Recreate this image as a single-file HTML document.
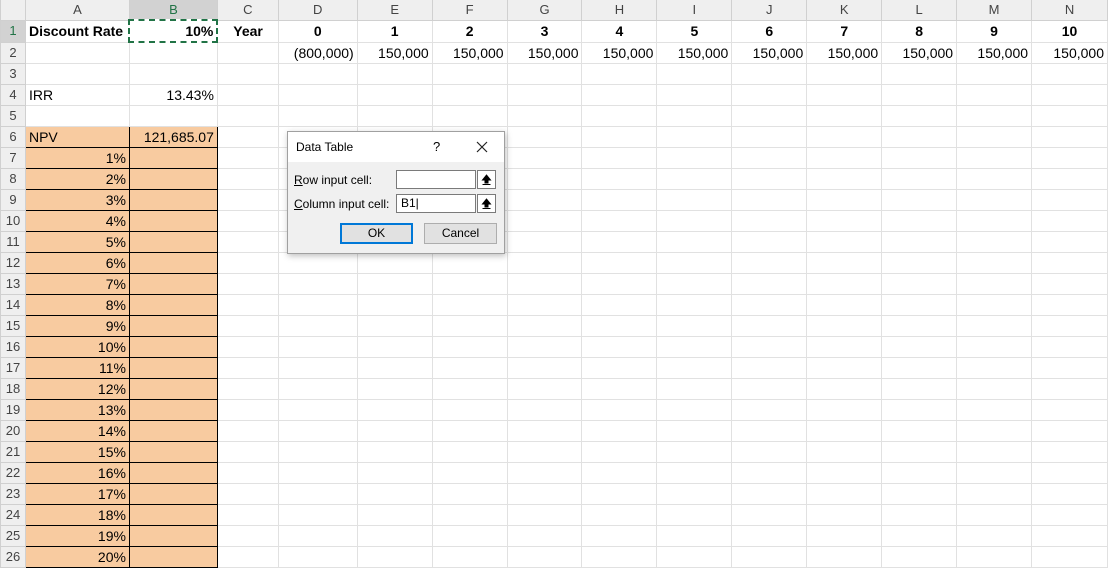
<!DOCTYPE html>
<html><head><style>
body{margin:0;width:1108px;height:566px;overflow:hidden;background:#fff;font-family:"Liberation Sans",Arial,sans-serif;font-size:14px;position:relative}
table{border-collapse:collapse;table-layout:fixed;position:absolute;left:0;top:-1px}
td{border:1px solid #e1e1e1;height:20px;padding:0 3px;white-space:nowrap;overflow:hidden;line-height:20px}
tr.h td{height:19px;line-height:19px;background:#efefef;color:#444;text-align:center;border-color:#d0d0d0;font-size:13px}
table td.rh{background:#efefef;color:#444;text-align:center;padding:0;border-color:#d0d0d0;font-size:13px}
.r{text-align:right}.c{text-align:center}.b{font-weight:bold}
.o{background:#f8cba0;border:1px solid #000}
.sel{background:#d2d2d2!important;color:#217346!important}
.dlg{position:absolute;left:287px;top:131px;width:216px;height:121px;background:#f0f0f0;border:1px solid #a0a0a0;box-shadow:1px 2px 6px rgba(0,0,0,.25);font-size:12px;color:#000}
.inp{position:absolute;left:108px;width:80px;height:19px;background:#fff;border:1px solid #7a7a7a;box-sizing:border-box;font-size:12px;line-height:17px;padding-left:4px}
.ib{position:absolute;left:189px;width:19px;height:19px;background:#fff;border:1px solid #7a7a7a;box-sizing:border-box}
.btn{position:absolute;top:91px;height:21px;box-sizing:border-box;background:#e1e1e1;border:1px solid #adadad;text-align:center;line-height:19px;font-size:12px}
</style></head><body>
<table>
<colgroup><col style="width:25px"><col style="width:104px"><col style="width:88px"><col style="width:61px"><col style="width:79px"><col style="width:75px"><col style="width:75px"><col style="width:75px"><col style="width:75px"><col style="width:75px"><col style="width:75px"><col style="width:75px"><col style="width:75px"><col style="width:75px"><col style="width:76px"></colgroup>
<tr class="h"><td></td><td>A</td><td class="sel">B</td><td>C</td><td>D</td><td>E</td><td>F</td><td>G</td><td>H</td><td>I</td><td>J</td><td>K</td><td>L</td><td>M</td><td>N</td></tr>
<tr><td class="rh sel">1</td><td class="b">Discount Rate</td><td class="r b" style="border:2px dashed #217346">10%</td><td class="c b">Year</td><td class="c b">0</td><td class="c b">1</td><td class="c b">2</td><td class="c b">3</td><td class="c b">4</td><td class="c b">5</td><td class="c b">6</td><td class="c b">7</td><td class="c b">8</td><td class="c b">9</td><td class="c b">10</td></tr>
<tr><td class="rh">2</td><td></td><td></td><td></td><td class="r">(800,000)</td><td class="r">150,000</td><td class="r">150,000</td><td class="r">150,000</td><td class="r">150,000</td><td class="r">150,000</td><td class="r">150,000</td><td class="r">150,000</td><td class="r">150,000</td><td class="r">150,000</td><td class="r">150,000</td></tr>
<tr><td class="rh">3</td><td></td><td></td><td></td><td></td><td></td><td></td><td></td><td></td><td></td><td></td><td></td><td></td><td></td><td></td></tr>
<tr><td class="rh">4</td><td>IRR</td><td class="r">13.43%</td><td></td><td></td><td></td><td></td><td></td><td></td><td></td><td></td><td></td><td></td><td></td><td></td></tr>
<tr><td class="rh">5</td><td></td><td></td><td></td><td></td><td></td><td></td><td></td><td></td><td></td><td></td><td></td><td></td><td></td><td></td></tr>
<tr><td class="rh">6</td><td class="o">NPV</td><td class="o r">121,685.07</td><td></td><td></td><td></td><td></td><td></td><td></td><td></td><td></td><td></td><td></td><td></td><td></td></tr>
<tr><td class="rh">7</td><td class="o r">1%</td><td class="o"></td><td></td><td></td><td></td><td></td><td></td><td></td><td></td><td></td><td></td><td></td><td></td><td></td></tr>
<tr><td class="rh">8</td><td class="o r">2%</td><td class="o"></td><td></td><td></td><td></td><td></td><td></td><td></td><td></td><td></td><td></td><td></td><td></td><td></td></tr>
<tr><td class="rh">9</td><td class="o r">3%</td><td class="o"></td><td></td><td></td><td></td><td></td><td></td><td></td><td></td><td></td><td></td><td></td><td></td><td></td></tr>
<tr><td class="rh">10</td><td class="o r">4%</td><td class="o"></td><td></td><td></td><td></td><td></td><td></td><td></td><td></td><td></td><td></td><td></td><td></td><td></td></tr>
<tr><td class="rh">11</td><td class="o r">5%</td><td class="o"></td><td></td><td></td><td></td><td></td><td></td><td></td><td></td><td></td><td></td><td></td><td></td><td></td></tr>
<tr><td class="rh">12</td><td class="o r">6%</td><td class="o"></td><td></td><td></td><td></td><td></td><td></td><td></td><td></td><td></td><td></td><td></td><td></td><td></td></tr>
<tr><td class="rh">13</td><td class="o r">7%</td><td class="o"></td><td></td><td></td><td></td><td></td><td></td><td></td><td></td><td></td><td></td><td></td><td></td><td></td></tr>
<tr><td class="rh">14</td><td class="o r">8%</td><td class="o"></td><td></td><td></td><td></td><td></td><td></td><td></td><td></td><td></td><td></td><td></td><td></td><td></td></tr>
<tr><td class="rh">15</td><td class="o r">9%</td><td class="o"></td><td></td><td></td><td></td><td></td><td></td><td></td><td></td><td></td><td></td><td></td><td></td><td></td></tr>
<tr><td class="rh">16</td><td class="o r">10%</td><td class="o"></td><td></td><td></td><td></td><td></td><td></td><td></td><td></td><td></td><td></td><td></td><td></td><td></td></tr>
<tr><td class="rh">17</td><td class="o r">11%</td><td class="o"></td><td></td><td></td><td></td><td></td><td></td><td></td><td></td><td></td><td></td><td></td><td></td><td></td></tr>
<tr><td class="rh">18</td><td class="o r">12%</td><td class="o"></td><td></td><td></td><td></td><td></td><td></td><td></td><td></td><td></td><td></td><td></td><td></td><td></td></tr>
<tr><td class="rh">19</td><td class="o r">13%</td><td class="o"></td><td></td><td></td><td></td><td></td><td></td><td></td><td></td><td></td><td></td><td></td><td></td><td></td></tr>
<tr><td class="rh">20</td><td class="o r">14%</td><td class="o"></td><td></td><td></td><td></td><td></td><td></td><td></td><td></td><td></td><td></td><td></td><td></td><td></td></tr>
<tr><td class="rh">21</td><td class="o r">15%</td><td class="o"></td><td></td><td></td><td></td><td></td><td></td><td></td><td></td><td></td><td></td><td></td><td></td><td></td></tr>
<tr><td class="rh">22</td><td class="o r">16%</td><td class="o"></td><td></td><td></td><td></td><td></td><td></td><td></td><td></td><td></td><td></td><td></td><td></td><td></td></tr>
<tr><td class="rh">23</td><td class="o r">17%</td><td class="o"></td><td></td><td></td><td></td><td></td><td></td><td></td><td></td><td></td><td></td><td></td><td></td><td></td></tr>
<tr><td class="rh">24</td><td class="o r">18%</td><td class="o"></td><td></td><td></td><td></td><td></td><td></td><td></td><td></td><td></td><td></td><td></td><td></td><td></td></tr>
<tr><td class="rh">25</td><td class="o r">19%</td><td class="o"></td><td></td><td></td><td></td><td></td><td></td><td></td><td></td><td></td><td></td><td></td><td></td><td></td></tr>
<tr><td class="rh">26</td><td class="o r">20%</td><td class="o"></td><td></td><td></td><td></td><td></td><td></td><td></td><td></td><td></td><td></td><td></td><td></td><td></td></tr>
</table>
<div class="dlg">
<div style="position:absolute;left:0;top:0;width:216px;height:30px;background:#fff"></div>
<div style="position:absolute;left:8px;top:8px">Data Table</div>
<div style="position:absolute;left:145px;top:7px;font-size:13px">?</div>
<svg style="position:absolute;left:188px;top:9px" width="12" height="12"><path d="M1 1L11 11M11 1L1 11" stroke="#222" stroke-width="1.2"/></svg>
<div style="position:absolute;left:6px;top:41px"><u>R</u>ow input cell:</div>
<div class="inp" style="top:38px"></div><div class="ib" style="top:38px"><svg width="17" height="17"><path d="M8.5 4L4.5 9H7V12H10V9H12.5Z M4.5 13.5H12.5" fill="#000" stroke="#000" stroke-width="1"/></svg></div>
<div style="position:absolute;left:6px;top:65px"><u>C</u>olumn input cell:</div>
<div class="inp" style="top:62px">B1|</div><div class="ib" style="top:62px"><svg width="17" height="17"><path d="M8.5 4L4.5 9H7V12H10V9H12.5Z M4.5 13.5H12.5" fill="#000" stroke="#000" stroke-width="1"/></svg></div>
<div class="btn" style="left:52px;width:73px;border:2px solid #0078d7;line-height:17px">OK</div>
<div class="btn" style="left:136px;width:73px">Cancel</div>
</div>
</body></html>
